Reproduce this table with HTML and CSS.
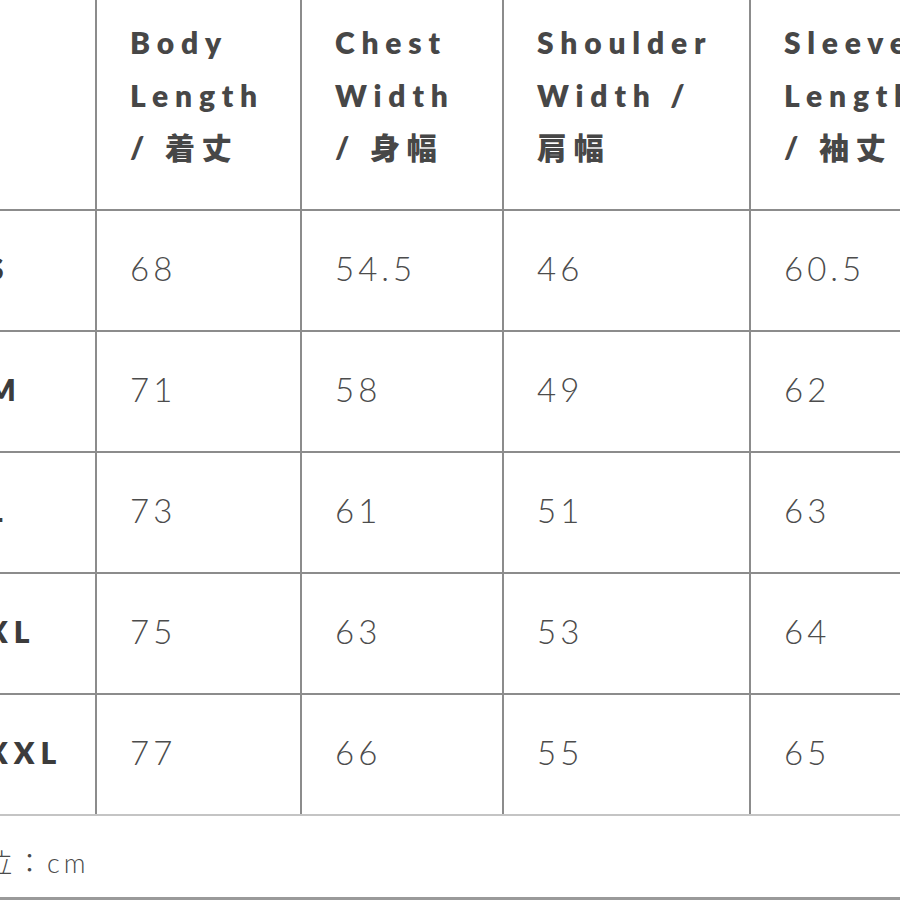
FILE: index.html
```html
<!DOCTYPE html>
<html lang="ja">
<head>
<meta charset="utf-8">
<link rel="stylesheet" href="styles.css">
</head>
<body>
<div class="frame">
  <table class="chart">
    <colgroup>
      <col class="c-size">
      <col class="c-body">
      <col class="c-chest">
      <col class="c-shoulder">
      <col class="c-sleeve">
    </colgroup>
    <thead>
      <tr class="head">
        <th><div class="hd"></div></th>
        <th><div class="hd"><span>Body</span><span>Length</span><span>/ 着丈</span></div></th>
        <th><div class="hd"><span>Chest</span><span>Width</span><span>/ 身幅</span></div></th>
        <th><div class="hd"><span>Shoulder</span><span>Width /</span><span>肩幅</span></div></th>
        <th><div class="hd"><span>Sleeve</span><span>Length</span><span>/ 袖丈</span></div></th>
      </tr>
    </thead>
    <tbody>
      <tr><td class="size">S</td><td>68</td><td>54.5</td><td>46</td><td>60.5</td></tr>
      <tr><td class="size">M</td><td>71</td><td>58</td><td>49</td><td>62</td></tr>
      <tr><td class="size">L</td><td>73</td><td>61</td><td>51</td><td>63</td></tr>
      <tr><td class="size">XL</td><td>75</td><td>63</td><td>53</td><td>64</td></tr>
      <tr class="last"><td class="size">XXL</td><td>77</td><td>66</td><td>55</td><td>65</td></tr>
    </tbody>
  </table>
  <p class="unit">単位：cm</p>
</div>
</body>
</html>
```
FILE: styles.css
```css
html, body {
  margin: 0;
  padding: 0;
  background: #fff;
}
.frame {
  width: 900px;
  height: 900px;
  overflow: hidden;
  box-sizing: border-box;
  border-bottom: 3px solid #9a9a9a;
}
.chart {
  border-collapse: collapse;
  table-layout: fixed;
  width: 1120px;
  margin-left: -61px;
  margin-top: -2px;
  color: #4a4a4a;
}
.c-size { width: 157px; }
.c-body { width: 205px; }
.c-chest { width: 202px; }
.c-shoulder { width: 247px; }
.c-sleeve { width: 309px; }
.chart th, .chart td {
  border: 2px solid #8c8c8c;
  text-align: left;
  padding: 0 0 0 33px;
}
.chart tr > :first-child { border-left: none; }
.head th {
  vertical-align: top;
  border-top: none;
  padding: 0 0 0 33px;
}
.hd {
  height: 211px;
  box-sizing: border-box;
  padding-top: 29px;
  display: flex;
  flex-direction: column;
  font-family: Lato, "Noto Sans CJK JP", sans-serif;
  font-weight: 800;
  font-size: 30px;
  letter-spacing: 6.8px;
  color: #474747;
  white-space: nowrap;
}
.hd span {
  display: block;
  height: 52.5px;
  line-height: 30px;
}
.chart td {
  height: 113px;
  vertical-align: middle;
  font-family: Lato, sans-serif;
  font-weight: 300;
  font-size: 33px;
  letter-spacing: 4px;
  color: #4c4c4c;
  padding-top: 0;
  padding-bottom: 6px;
}
.chart td.size {
  padding-left: 48px;
  font-weight: 800;
  font-size: 30px;
  letter-spacing: 6px;
  color: #3c3c3c;
}
.last td { border-bottom-color: #c4c4c4; }
.unit {
  margin: 26px 0 0 -46px;
  font-family: Lato, "Noto Sans CJK JP", sans-serif;
  font-weight: 300;
  font-size: 27px;
  letter-spacing: 4px;
  color: #4a4a4a;
}
```
